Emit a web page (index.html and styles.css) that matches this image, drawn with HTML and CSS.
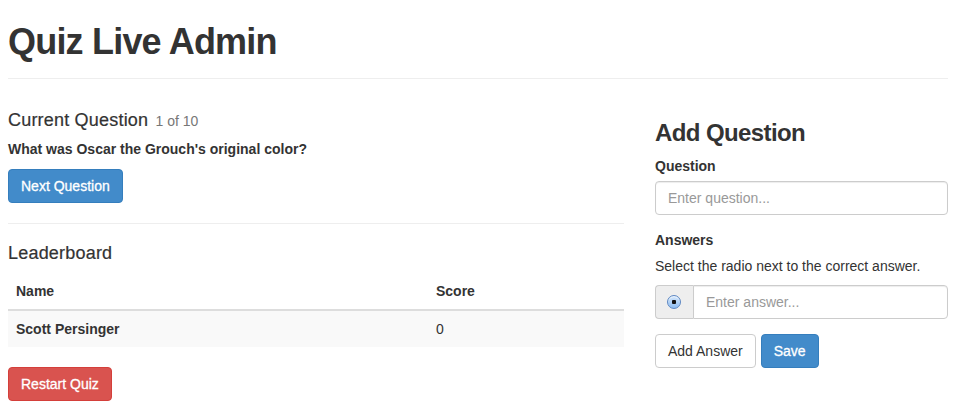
FILE: index.html
```html
<!DOCTYPE html>
<html>
<head>
<meta charset="utf-8">
<title>Quiz Live Admin</title>
<link rel="stylesheet" href="styles.css">
</head>
<body>
  <header class="page-header">
    <h1 class="title">Quiz Live Admin</h1>
  </header>
  <main class="layout">
    <section class="left">
      <h4 class="section-title">Current Question <small class="muted">1 of 10</small></h4>
      <p class="question">What was Oscar the Grouch's original color?</p>
      <button class="btn btn-primary">Next Question</button>
      <hr class="divider">
      <h4 class="section-title leader-title">Leaderboard</h4>
      <table class="board">
        <thead>
          <tr><th class="col-name">Name</th><th>Score</th></tr>
        </thead>
        <tbody>
          <tr class="striped"><td class="strong">Scott Persinger</td><td>0</td></tr>
        </tbody>
      </table>
      <button class="btn btn-danger restart">Restart Quiz</button>
    </section>
    <section class="right">
      <h3 class="add-title">Add Question</h3>
      <label class="field-label">Question</label>
      <input class="form-control" type="text" placeholder="Enter question...">
      <label class="field-label answers-label">Answers</label>
      <p class="help">Select the radio next to the correct answer.</p>
      <div class="input-group">
        <span class="addon"><span class="radio"></span></span>
        <input class="form-control group-input" type="text" placeholder="Enter answer...">
      </div>
      <div class="actions">
        <button class="btn btn-default">Add Answer</button>
        <button class="btn btn-primary">Save</button>
      </div>
    </section>
  </main>
</body>
</html>
```
FILE: styles.css
```css
* { box-sizing: border-box; }
html, body { margin: 0; padding: 0; }
body {
  padding: 0 10px 0 8px;
  font-family: "Liberation Sans", Arial, Helvetica, sans-serif;
  font-size: 14px;
  line-height: 20px;
  color: #333;
  background: #fff;
}
.page-header {
  border-bottom: 1px solid #eee;
  padding-bottom: 16px;
}
.title {
  margin: 22px 0 0;
  font-size: 36px;
  line-height: 40px;
  font-weight: bold;
  letter-spacing: -0.8px;
}
.layout {
  display: flex;
  gap: 31px;
}
.left { width: 616px; flex: none; }
.right { flex: 1; display: flex; flex-direction: column; align-items: flex-start; }
.section-title {
  margin: 31px 0 0;
  font-size: 18px;
  line-height: 20px;
  font-weight: normal;
  letter-spacing: 0.2px;
  -webkit-text-stroke: 0.2px #333;
}
.muted {
  font-size: 14px;
  color: #777;
  letter-spacing: 0;
  margin-left: 2px;
  -webkit-text-stroke: 0;
}
.question { margin: 8px 0 0; font-weight: bold; }
.btn {
  display: inline-block;
  font-family: inherit;
  font-size: 14px;
  line-height: 20px;
  padding: 6px 12px;
  border: 1px solid transparent;
  border-radius: 4px;
  cursor: pointer;
}
.btn-primary { background: #428bca; border-color: #357ebd; color: #fff; -webkit-text-stroke: 0.3px #fff; }
.btn-danger { background: #d9534f; border-color: #d43f3a; color: #fff; -webkit-text-stroke: 0.3px #fff; }
.btn-default { background: #fff; border-color: #ccc; color: #333; }
.left > .btn-primary { margin-top: 10px; }
.divider { margin: 20px 0 0; border: 0; border-top: 1px solid #eee; }
.leader-title { margin-top: 19px; }
.board {
  width: 100%;
  margin-top: 10px;
  border-collapse: collapse;
}
.board th, .board td {
  text-align: left;
  padding: 8px;
  line-height: 20px;
}
.board th { border-bottom: 2px solid #ddd; font-weight: bold; }
.col-name { width: 420px; }
.striped td { background: #f9f9f9; }
.strong { font-weight: bold; }
.restart { margin-top: 20px; }
.add-title {
  margin: 41px 0 0;
  font-size: 24px;
  line-height: 26px;
  font-weight: bold;
  letter-spacing: -0.6px;
}
.field-label { display: block; font-weight: bold; margin-top: 10px; }
.answers-label { margin-top: 15px; }
.form-control {
  display: block;
  width: 100%;
  height: 34px;
  margin-top: 5px;
  padding: 6px 12px;
  font-family: inherit;
  font-size: 14px;
  color: #555;
  border: 1px solid #ccc;
  border-radius: 4px;
  box-shadow: inset 0 1px 1px rgba(0,0,0,0.075);
}
.form-control::placeholder { color: #999; }
.help { margin: 6px 0 0; }
.input-group { display: flex; width: 100%; margin-top: 9px; }
.addon {
  flex: none;
  width: 38px;
  height: 34px;
  display: flex;
  align-items: center;
  justify-content: center;
  background: #eee;
  border: 1px solid #ccc;
  border-right: 0;
  border-radius: 4px 0 0 4px;
}
.radio {
  width: 14px;
  height: 14px;
  margin-left: -2px;
  border-radius: 50%;
  border: 1px solid #5d87c2;
  background: radial-gradient(circle at 50% 50%, #111 0 2px, transparent 2.5px), linear-gradient(#d6e8fc, #8dbcf0);
  box-shadow: inset 0 1px 1px rgba(255,255,255,0.7);
}
.group-input { margin-top: 0; flex: 1; border-radius: 0 4px 4px 0; }
.actions { margin-top: 15px; display: flex; gap: 5px; }
```
